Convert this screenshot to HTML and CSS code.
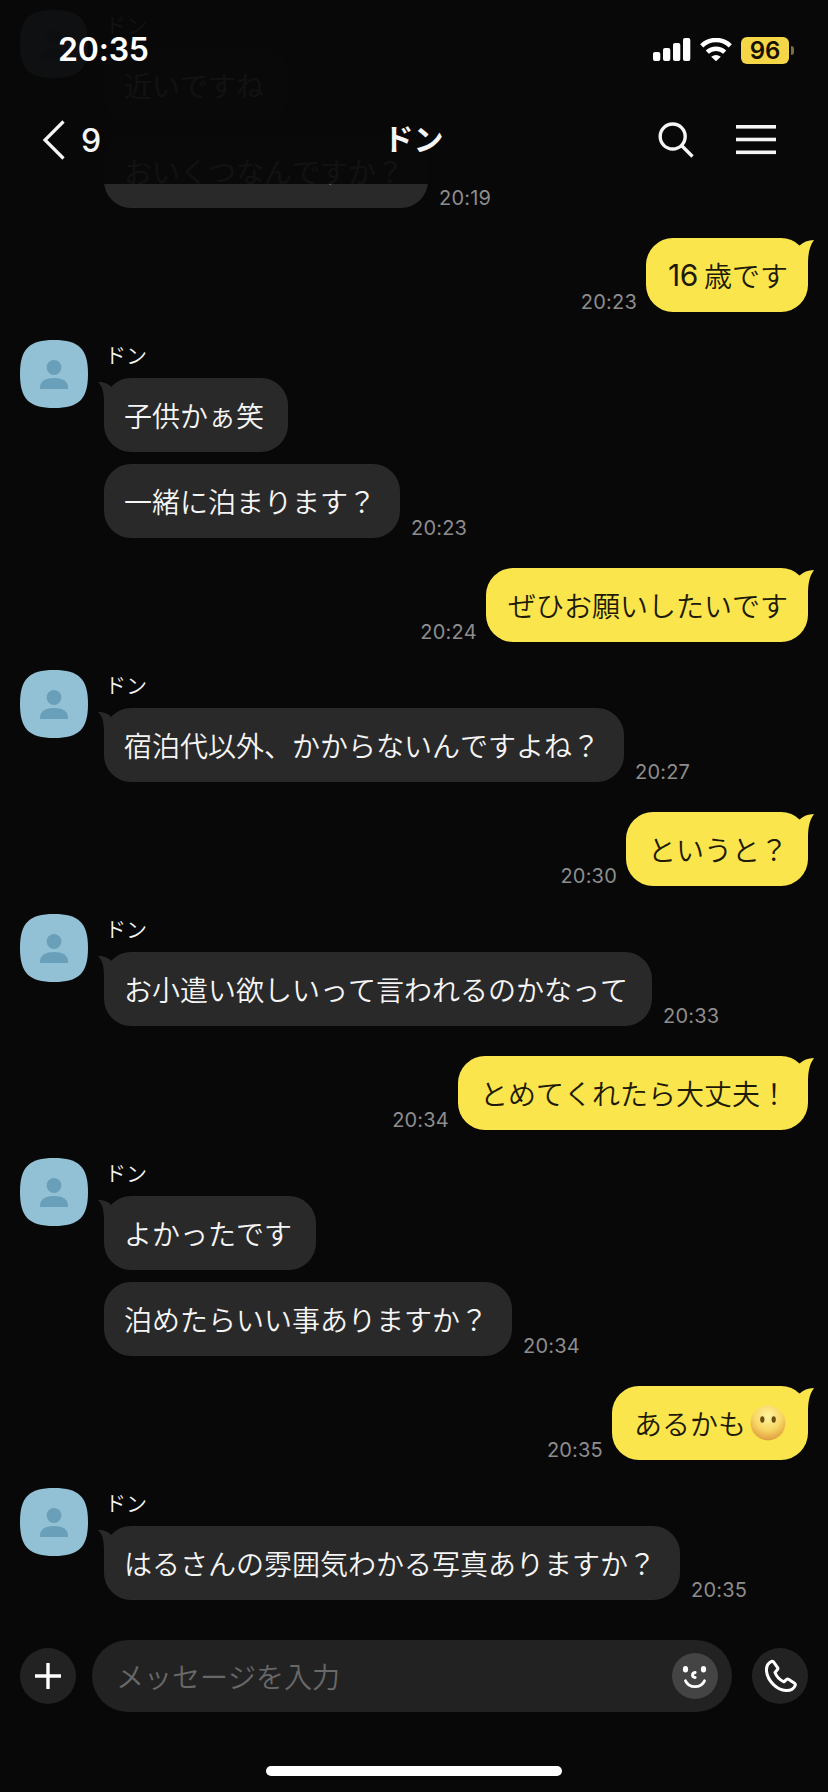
FILE: index.html
```
<!DOCTYPE html>
<html lang="ja">
<head>
<meta charset="utf-8">
<title>ドン</title>
<link rel="stylesheet" href="styles.css">
</head>
<body>
<svg width="0" height="0" class="defs">
  <defs>
    <symbol id="avatar" viewBox="0 0 68 68">
      <path fill="#92c1d5" d="M34 0C59 0 68 9 68 34S59 68 34 68 0 59 0 34 9 0 34 0Z"/>
      <circle cx="34" cy="27.5" r="7.4" fill="#699fb8"/>
      <path fill="#699fb8" d="M20 49V47.500C20 41 26 38 34 38S48 41 48 47.500V49Z"/>
    </symbol>
    <symbol id="tail-in" viewBox="0 0 20 30">
      <path d="M0 4C6 3.500 11 6 14 10L16 26H6C6 15 5 9 0 4Z"/>
    </symbol>
    <symbol id="tail-out" viewBox="0 0 20 30">
      <path d="M20 2C14 2 9 4 5 8L3 28H14C14 16 15 9 20 2Z"/>
    </symbol>
  </defs>
</svg>
<div class="screen">
  <header class="top">
    <div class="status">
      <span class="clock">20:35</span>
      <span class="indicators">
        <svg width="38" height="24" viewBox="0 0 38 24" fill="#fff"><rect x="0" y="14" width="7.300" height="9" rx="2"/><rect x="10" y="10" width="7.300" height="13" rx="2"/><rect x="20" y="5" width="7.300" height="18" rx="2"/><rect x="30" y="0" width="7.300" height="23" rx="2"/></svg>
        <svg class="wifi" width="32" height="24" viewBox="0 0 32 24" fill="none" stroke="#fff" stroke-width="4.400"><path d="M1.700 7.800A20.500 20.500 0 0 1 30.300 7.800"/><path d="M7.300 14.200A12.500 12.500 0 0 1 24.700 14.200"/><path fill="#fff" stroke="none" d="M16 23.300L11.200 18.800Q16 15 20.800 18.800Z"/></svg>
        <span class="battery">96</span><span class="nub"></span>
      </span>
    </div>
    <nav class="bar">
      <div class="back">
        <svg width="24" height="40" viewBox="0 0 24 40" fill="none" stroke="#f5f5f5" stroke-width="3.200"><path d="M21.500 1.500L3 20L21.500 38.500"/></svg>
        <span>9</span>
      </div>
      <h1>ドン</h1>
      <div class="tools">
        <svg width="38" height="38" viewBox="0 0 38 38" fill="none" stroke="#f5f5f5" stroke-width="3.400"><circle cx="15.700" cy="15.500" r="12.500"/><path d="M24.500 24.500L35.500 35.500"/></svg>
        <svg width="40" height="32" viewBox="0 0 40 32" fill="#f5f5f5"><rect y="1" width="40" height="3.600"/><rect y="13.700" width="40" height="3.600"/><rect y="26.500" width="40" height="3.600"/></svg>
      </div>
    </nav>
  </header>

  <main class="chat">
    <section class="in"><svg class="avatar"><use href="#avatar"/></svg><div class="stack"><div class="name">ドン</div>
      <div class="row"><div class="bubble">近いですね<svg class="tail"><use href="#tail-in"/></svg></div></div>
      <div class="row"><div class="bubble">おいくつなんですか？</div><time>20:19</time></div></div></section>
    <section class="out"><time>20:23</time><div class="bubble"><span class="num">16</span>歳です<svg class="tail"><use href="#tail-out"/></svg></div></section>
    <section class="in"><svg class="avatar"><use href="#avatar"/></svg><div class="stack"><div class="name">ドン</div>
      <div class="row"><div class="bubble">子供かぁ笑<svg class="tail"><use href="#tail-in"/></svg></div></div>
      <div class="row"><div class="bubble">一緒に泊まります？</div><time>20:23</time></div></div></section>
    <section class="out"><time>20:24</time><div class="bubble">ぜひお願いしたいです<svg class="tail"><use href="#tail-out"/></svg></div></section>
    <section class="in"><svg class="avatar"><use href="#avatar"/></svg><div class="stack"><div class="name">ドン</div>
      <div class="row"><div class="bubble">宿泊代以外、かからないんですよね？<svg class="tail"><use href="#tail-in"/></svg></div><time>20:27</time></div></div></section>
    <section class="out"><time>20:30</time><div class="bubble">というと？<svg class="tail"><use href="#tail-out"/></svg></div></section>
    <section class="in"><svg class="avatar"><use href="#avatar"/></svg><div class="stack"><div class="name">ドン</div>
      <div class="row"><div class="bubble">お小遣い欲しいって言われるのかなって<svg class="tail"><use href="#tail-in"/></svg></div><time>20:33</time></div></div></section>
    <section class="out"><time>20:34</time><div class="bubble">とめてくれたら大丈夫！<svg class="tail"><use href="#tail-out"/></svg></div></section>
    <section class="in"><svg class="avatar"><use href="#avatar"/></svg><div class="stack"><div class="name">ドン</div>
      <div class="row"><div class="bubble">よかったです<svg class="tail"><use href="#tail-in"/></svg></div></div>
      <div class="row"><div class="bubble">泊めたらいい事ありますか？</div><time>20:34</time></div></div></section>
    <section class="out"><time>20:35</time><div class="bubble">あるかも<svg class="emoji" viewBox="0 0 36 36"><defs><radialGradient id="face" cx=".5" cy=".3" r=".72"><stop offset="0" stop-color="#fff3a0"/><stop offset=".55" stop-color="#f8d765"/><stop offset="1" stop-color="#dd9a3c"/></radialGradient></defs><circle cx="18" cy="18" r="17.400" fill="url(#face)"/><ellipse cx="12.300" cy="14.500" rx="2.100" ry="3.300" fill="#6a4d14"/><ellipse cx="23.700" cy="14.500" rx="2.100" ry="3.300" fill="#6a4d14"/></svg><svg class="tail"><use href="#tail-out"/></svg></div></section>
    <section class="in"><svg class="avatar"><use href="#avatar"/></svg><div class="stack"><div class="name">ドン</div>
      <div class="row"><div class="bubble">はるさんの雰囲気わかる写真ありますか？<svg class="tail"><use href="#tail-in"/></svg></div><time>20:35</time></div></div></section>
  </main>

  <footer class="composer">
    <div class="round"><svg width="26" height="26" viewBox="0 0 26 26" stroke="#fff" stroke-width="3.400"><path d="M13 0V26M0 13H26"/></svg></div>
    <div class="field"><span>メッセージを入力</span>
      <div class="smile"><svg width="46" height="46" viewBox="0 0 46 46" fill="none" stroke="#fff" stroke-width="2.800" stroke-linecap="round"><ellipse cx="13.500" cy="16.200" rx="2.600" ry="3.300" fill="#fff" stroke="none"/><ellipse cx="31.500" cy="16.200" rx="2.600" ry="3.300" fill="#fff" stroke="none"/><path d="M23.200 19.500Q20.300 20 20.500 22.200Q20.500 24.300 23.200 24.500"/><path d="M13.500 27.800C17 35.500 29 35.500 32.500 27.800"/></svg></div>
    </div>
    <div class="round"><svg width="34" height="34" viewBox="0 0 34 34" fill="none" stroke="#fff" stroke-width="3" stroke-linejoin="round"><path d="M8.500 2.400C5 4 3.200 7.500 3.500 12C4.500 22 14 31 23 31.500C27.500 31.700 31 29.500 32.300 26.200Q32.500 25 31.500 24.200L25.500 20.200Q24.500 19.600 23.600 20.400L21 22.800C17 21 13.500 17.500 12 13.500L14.500 10.500Q15.200 9.500 14.600 8.600L10.500 2.900Q9.500 1.900 8.500 2.400Z"/></svg></div>
  </footer>
  <div class="home"></div>
</div>
</body>
</html>
```
FILE: styles.css
```
* { box-sizing: border-box; }
body { margin: 0; background: #080808; font-family: Inter, "Noto Sans CJK JP", sans-serif; font-kerning: none; }
svg { display: block; flex: none; }
.defs { position: absolute; }
.screen { position: relative; display: flex; flex-direction: column; width: 828px; height: 1792px; overflow: hidden; background: #080808; color: #f5f5f5; }

.top { position: absolute; inset: 0 0 auto; z-index: 2; height: 184px; background: rgba(8, 8, 8, .96); }
.status { display: flex; justify-content: space-between; align-items: center; height: 100px; padding: 0 34px 0 58px; }
.clock { font-size: 32px; font-weight: 600; line-height: 40px; letter-spacing: -.2px; color: #fff; }
.indicators { display: flex; align-items: center; }
.wifi { margin: 0 9px; }
.battery { width: 48px; height: 27px; border-radius: 6px; background: #f5d648; color: #151000; font-size: 24px; font-weight: 600; line-height: 27px; text-align: center; }
.nub { width: 3px; height: 9px; margin-left: 2px; border-radius: 0 4px 4px 0; background: #77703f; }
.bar { display: grid; grid-template-columns: 1fr auto 1fr; align-items: center; height: 80px; padding: 0 52px 0 42px; }
.back { display: flex; align-items: center; gap: 15px; font-size: 32px; font-weight: 500; }
h1 { margin: 0; padding: 0 0 6px 9px; font: 700 30px/36px "Noto Sans CJK JP", sans-serif; }
.tools { display: flex; justify-content: flex-end; align-items: center; gap: 41px; }

.chat { flex: none; display: flex; flex-direction: column; padding: 10px 20px 0; }
.in { display: flex; gap: 16px; align-items: flex-start; }
.avatar { width: 68px; height: 68px; }
.stack { display: flex; flex-direction: column; gap: 12px; }
.name { height: 26px; padding-left: 1px; font: 350 21px/28px "Noto Sans CJK JP", sans-serif; }
.row { display: flex; align-items: flex-end; gap: 11px; }
.bubble { position: relative; display: flex; align-items: center; height: 74px; padding: 0 24px 1px 20px; border-radius: 27px; background: #292929; font: 350 28px/72px "Noto Sans CJK JP", sans-serif; font-kerning: none; white-space: nowrap; }
.tail { position: absolute; top: 0; left: -6px; width: 20px; height: 30px; fill: #292929; }
.out { display: flex; justify-content: flex-end; align-items: flex-end; gap: 9px; margin: 30px 0 28px; }
.out .bubble { padding: 0 20px 1px 22px; background: #fbe54d; color: #1d1a08; }
.out .tail { right: -6px; left: auto; fill: #fbe54d; }
.num { width: 36px; font-family: Inter, sans-serif; font-size: 30px; font-weight: 400; letter-spacing: -.5px; }
.emoji { width: 36px; height: 36px; margin: 0 2px 0 4px; }
time { font-size: 20px; line-height: 20px; letter-spacing: .2px; color: #8d8d8d; }

.composer { display: flex; align-items: center; gap: 16px; margin-top: 40px; padding: 0 20px; }
.round { display: grid; place-items: center; flex: none; width: 56px; height: 56px; border-radius: 50%; background: #222; }
.field { display: flex; flex: 1; align-items: center; justify-content: space-between; height: 72px; margin-right: 4px; padding: 0 14px 0 24px; border-radius: 36px; background: #222; color: #686868; font: 350 28px/70px "Noto Sans CJK JP", sans-serif; font-kerning: none; }
.smile { width: 46px; height: 46px; border-radius: 50%; background: #444; }
.home { width: 296px; height: 10px; margin: 54px auto 0; border-radius: 5px; background: #fff; }
```
